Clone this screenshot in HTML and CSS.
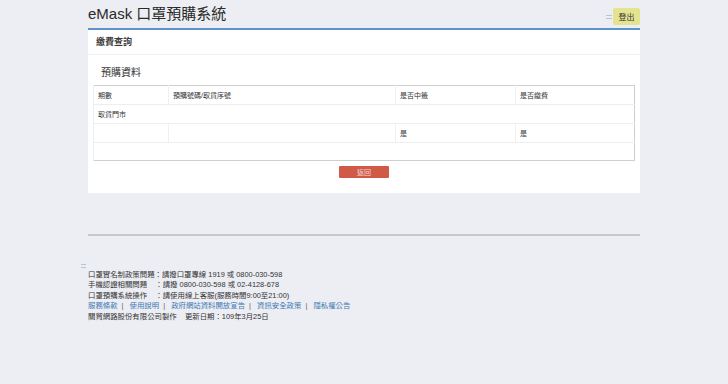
FILE: index.html
```html
<!DOCTYPE html>
<html lang="zh-Hant">
<head>
  <meta charset="UTF-8" />
  <title>eMask 口罩預購系統</title>
  <link rel="stylesheet" href="styles.css">
</head>
<body>

  <div class="wrap">
    <div class="top">
      <h1>eMask 口罩預購系統</h1>
      <div class="top-right">
        <span class="menu-ico"></span>
        <button class="logout">登出</button>
      </div>
    </div>

    <div class="panel">
      <div class="panel-head">繳費查詢</div>
      <div class="panel-body">
        <h3>預購資料</h3>
        <table class="tbl">
          <tr>
            <th class="c1">期數</th>
            <th class="c2">預購號碼/取貨序號</th>
            <th class="c3">是否中籤</th>
            <th class="c4">是否繳費</th>
          </tr>
          <tr>
            <td colspan="4">取貨門市</td>
          </tr>
          <tr>
            <td></td>
            <td></td>
            <td>是</td>
            <td>是</td>
          </tr>
          <tr class="empty">
            <td colspan="4"></td>
          </tr>
        </table>
        <div class="actions">
          <button class="back">返回</button>
        </div>
      </div>
    </div>

    <hr class="sep">
  </div>

  <div class="footer">
    <span class="menu-ico small"></span>
    <div class="foot-lines">
      <div>口罩實名制政策問題：請撥口罩專線 1919 或 0800-030-598</div>
      <div>手機認證相關問題&nbsp;&nbsp;&nbsp;&nbsp;：請撥 0800-030-598 或 02-4128-678</div>
      <div>口罩預購系統操作&nbsp;&nbsp;&nbsp;&nbsp;：請使用線上客服(服務時間9:00至21:00)</div>
      <div class="links">
        <a href="#">服務條款</a><span>|</span>
        <a href="#">使用說明</a><span>|</span>
        <a href="#">政府網站資料開放宣告</a><span>|</span>
        <a href="#">資訊安全政策</a><span>|</span>
        <a href="#">隱私權公告</a>
      </div>
      <div>關貿網路股份有限公司製作&nbsp;&nbsp;&nbsp;&nbsp;更新日期：109年3月25日</div>
    </div>
  </div>

</body>
</html>
```

FILE: styles.css
```css
body {
  margin: 0;
  background: #eceef3;
  font-family: 'Liberation Sans', 'Noto Sans CJK TC', sans-serif;
  color: #333;
}
.wrap {
  width: 552px;
  margin: 0 0 0 88px;
}
.top {
  display: flex;
  justify-content: space-between;
  align-items: flex-end;
  height: 28px;
}
h1 {
  font-size: 15px;
  font-weight: normal;
  color: #2a2a2a;
  margin: 0 0 5px 0;
  line-height: 18px;
}
.top-right {
  display: flex;
  align-items: center;
  align-self: flex-start;
  margin-top: 8px;
}
.menu-ico {
  display: inline-block;
  width: 6px;
  height: 2px;
  border-top: 1px solid #b3c6dc;
  border-bottom: 1px solid #b3c6dc;
  margin-right: 1px;
}
.logout {
  background: #e4e38f;
  border: none;
  border-radius: 2px;
  font-family: inherit;
  font-size: 8px;
  color: #333;
  width: 27px;
  height: 17px;
  padding: 0;
}
.panel {
  background: #fff;
  border-top: 2px solid #5d93c8;
  height: 163px;
}
.panel-head {
  font-size: 9px;
  font-weight: bold;
  color: #3a3a3a;
  padding: 5px 8px 0 8px;
  height: 19px;
  border-bottom: 1px solid #f1f2f4;
}
.panel-body {
  padding: 0 5px;
}
h3 {
  font-size: 10px;
  font-weight: normal;
  margin: 0;
  padding: 9px 0 0 8px;
  height: 21px;
}
.tbl {
  width: 542px;
  border-collapse: collapse;
  border: 1px solid #cfcfcf;
  font-size: 7px;
  color: #333;
}
.tbl th,
.tbl td {
  text-align: left;
  font-weight: normal;
  height: 18px;
  padding: 0 4px;
  border-top: 1px solid #eeeeee;
  border-left: 1px solid #f0f0f0;
}
.tbl th {
  border-top: none;
}
.c1 { width: 66px; }
.c2 { width: 218px; }
.c3 { width: 111px; }
.empty td {
  height: 17px;
}
.actions {
  display: flex;
  justify-content: center;
  padding-top: 5px;
}
.back {
  background: #d15a47;
  border: none;
  border-radius: 1px;
  color: #f2d7d2;
  font-family: inherit;
  font-size: 7px;
  width: 50px;
  height: 12px;
  padding: 0;
}
.sep {
  border: none;
  border-top: 2px solid #c6c8cd;
  margin: 41px 0 0 0;
}
.footer {
  margin: 28px 0 0 81px;
  font-size: 7.4px;
  color: #333;
}
.menu-ico.small {
  display: block;
  width: 5px;
  margin-bottom: 2px;
}
.foot-lines {
  margin-left: 7px;
  line-height: 10.4px;
}
.links a {
  color: #3e78b3;
  text-decoration: none;
}
.links span {
  color: #666;
  margin: 0 4px;
}
```
